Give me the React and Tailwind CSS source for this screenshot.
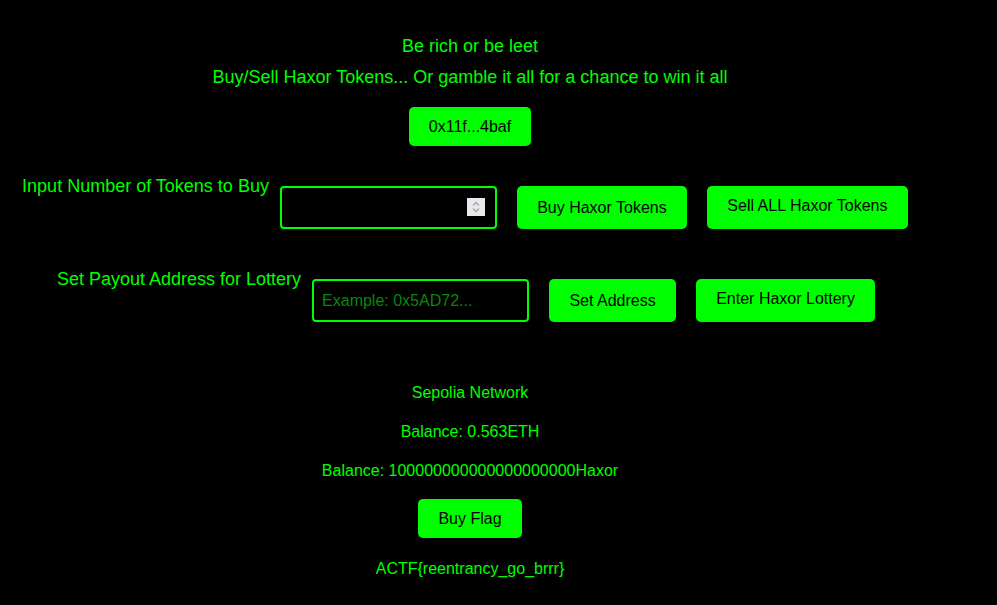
import React from "react";

const GreenButton = ({ children, className = "" }) => (
  <button
    className={`rounded-[5px] bg-[#00ff00] px-[20px] text-[16px] leading-[19px] text-black ${className}`}
  >
    {children}
  </button>
);

const Spinner = () => (
  <div className="pointer-events-none absolute right-[12px] top-[12px] flex h-[18px] w-[18px] items-center justify-center bg-[#e9e9ed]">
    <svg width="10" height="14" viewBox="0 0 10 14" fill="none">
      <path d="M2 5.5 L5 2.5 L8 5.5" stroke="#a3a3a8" strokeWidth="1.3" />
      <path d="M2 8.5 L5 11.5 L8 8.5" stroke="#a3a3a8" strokeWidth="1.3" />
    </svg>
  </div>
);

const App = () => {
  return (
    <div className="min-h-screen bg-black font-['Liberation_Sans',Arial,sans-serif] text-[#00ff00]">
      <div className="flex w-[940px] flex-col items-center pt-[35.5px]">
        <p className="text-[18px] leading-[21px]">Be rich or be leet</p>
        <p className="mt-[10px] text-[18px] leading-[21px]">
          Buy/Sell Haxor Tokens... Or gamble it all for a chance to win it all
        </p>
        <GreenButton className="mt-[19.5px] py-[10px]">0x11f...4baf</GreenButton>

        {/* buy / sell row */}
        <div className="mt-[30px] flex items-start pr-[10px]">
          <label className="mr-[11px] text-[18px] leading-[21px]">
            Input Number of Tokens to Buy
          </label>
          <div className="relative mt-[10px]">
            <input
              type="text"
              className="h-[43px] w-[217px] rounded-[4px] border-2 border-[#00ff00] bg-black px-[8px] text-[16px] text-[#00ff00] outline-none"
            />
            <Spinner />
          </div>
          <GreenButton className="ml-[20px] mt-[10px] w-[170px] py-[12px]">Buy Haxor Tokens</GreenButton>
          <GreenButton className="ml-[20px] mt-[10px] w-[201px] pb-[14.5px] pt-[9.5px]">
            Sell ALL Haxor Tokens
          </GreenButton>
        </div>

        {/* lottery row */}
        <div className="mt-[40px] flex items-start pr-[8px]">
          <label className="mr-[11px] text-[18px] leading-[21px]">
            Set Payout Address for Lottery
          </label>
          <input
            type="text"
            placeholder="Example: 0x5AD72..."
            className="mt-[10px] h-[43px] w-[217px] rounded-[4px] border-2 border-[#00ff00] bg-black px-[8px] text-[16px] text-[#00ff00] outline-none placeholder:text-[#0a870a]"
          />
          <GreenButton className="ml-[20px] mt-[10px] w-[127px] py-[12px]">Set Address</GreenButton>
          <GreenButton className="ml-[20px] mt-[10px] w-[179px] pb-[14.5px] pt-[9.5px]">
            Enter Haxor Lottery
          </GreenButton>
        </div>

        <p className="mt-[60.5px] text-[16px] leading-[19px]">Sepolia Network</p>
        <p className="mt-[20px] text-[16px] leading-[19px]">Balance: 0.563ETH</p>
        <p className="mt-[20px] text-[16px] leading-[19px]">
          Balance: 100000000000000000000Haxor
        </p>
        <GreenButton className="mt-[19.5px] py-[10px]">Buy Flag</GreenButton>
        <p className="mt-[20.5px] text-[16px] leading-[19px]">ACTF{"{"}reentrancy_go_brrr{"}"}</p>
      </div>
    </div>
  );
};

export default App;
